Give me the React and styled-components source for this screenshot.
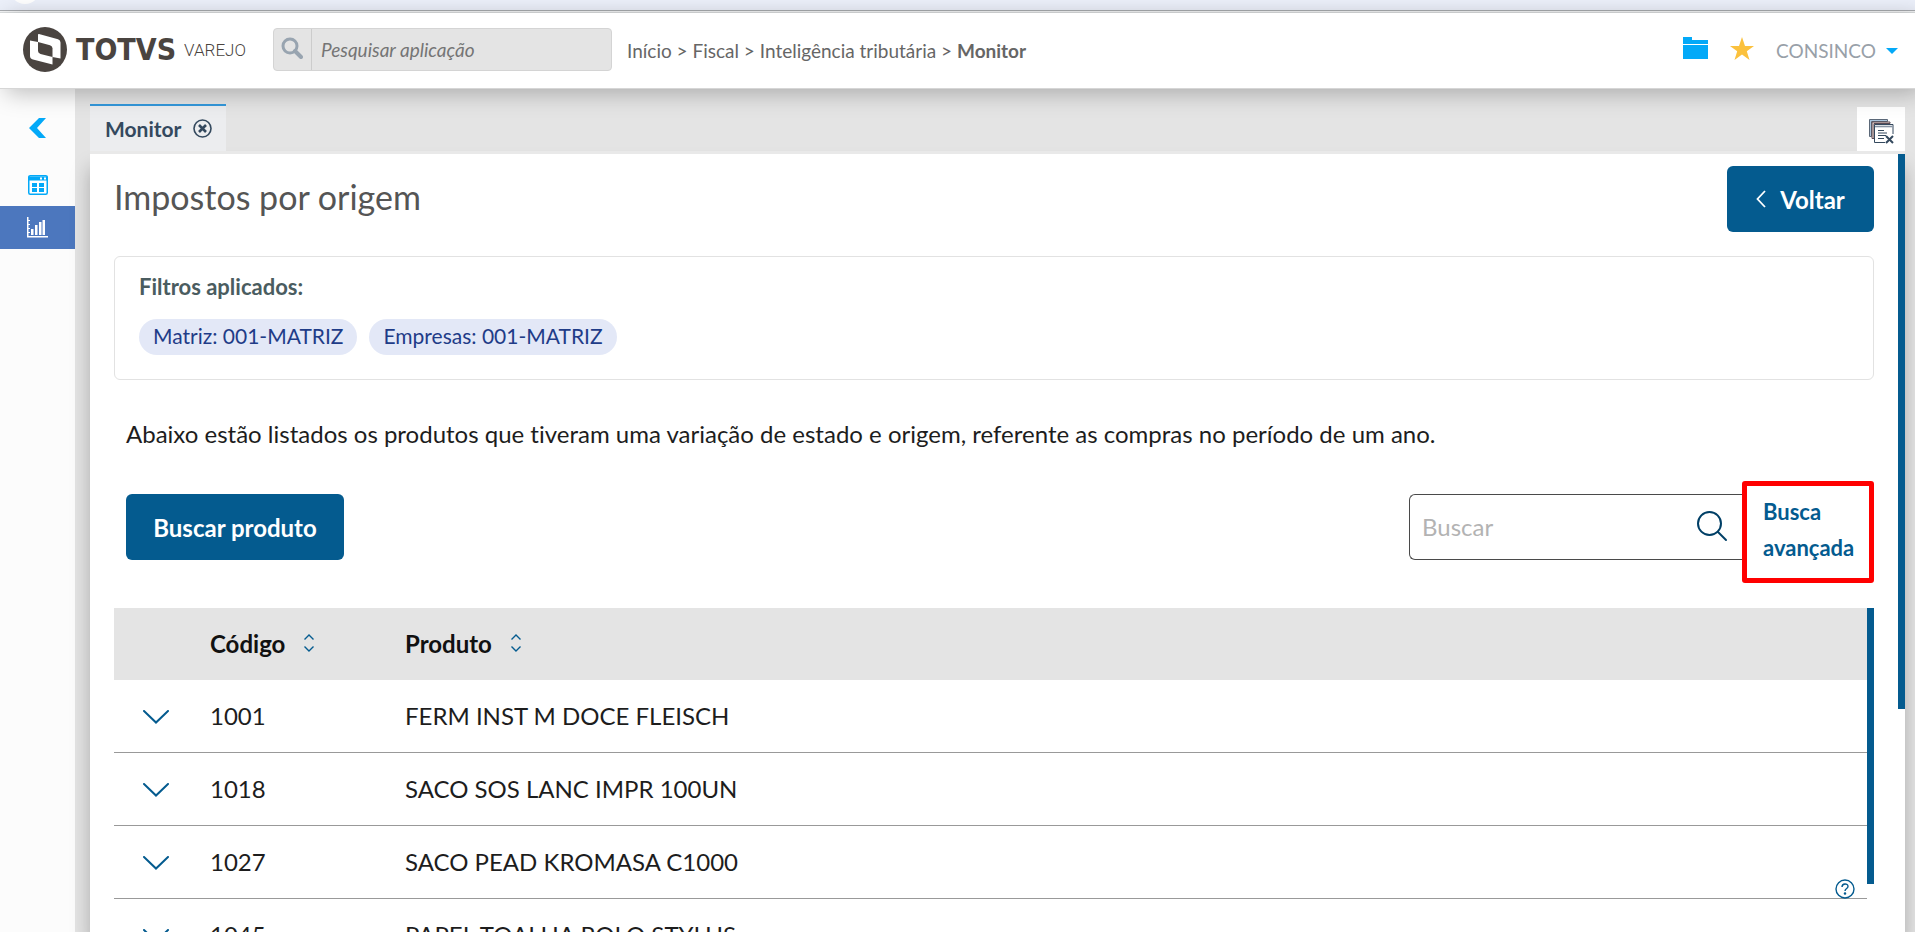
import React from "react";
import styled, { createGlobalStyle, css } from "styled-components";

const GlobalStyle = createGlobalStyle`
  *, *::before, *::after { box-sizing: border-box; }
  body { margin: 0; background: #e4e4e4; font-family: Lato, "Open Sans", sans-serif; font-variant-ligatures: none; color: #1d1d1d; }
  button, input { font-family: inherit; }
  h1, p { margin: 0; }
`;

const Shell = styled.div`
  height: 100vh;
  display: flex;
  flex-direction: column;
  overflow: hidden;
`;

const BrowserEdge = styled.div`
  position: relative;
  flex: none;
  height: 13px;
  background: #ecf0fa;
  border-bottom: 1px solid #dcdfe0;
  box-shadow: inset 0 -1px #f4f5f6, inset 0 -2px #a9acb0;
  overflow: hidden;
  &::before {
    content: "";
    position: absolute;
    left: 10px;
    top: -26px;
    width: 30px;
    height: 30px;
    border-radius: 50%;
    background: #fff;
  }
`;

const Header = styled.header`
  position: relative;
  z-index: 2;
  flex: none;
  height: 76px;
  display: flex;
  align-items: center;
  padding: 0 17px 2px 23px;
  background: #fff;
  border-bottom: 1px solid #d6d6d6;
  box-shadow: 6px 4px 22px rgba(0, 0, 0, 0.26);
`;

const Brand = styled.a`
  display: flex;
  align-items: center;
  width: 250px;
  flex: none;
  color: #4a4440;
  text-decoration: none;
`;

const BrandName = styled.span`
  margin-left: 9px;
  font: 700 30px/44px "DejaVu Sans Condensed", "DejaVu Sans", sans-serif;
`;

const BrandUnit = styled.span`
  margin-left: 8px;
  font: 300 17px/44px Roboto, sans-serif;
`;

const AppSearch = styled.label`
  display: flex;
  flex: none;
  width: 339px;
  height: 43px;
  background: #e4e4e4;
  border: 1px solid #d4d4d4;
  border-radius: 4px;
  overflow: hidden;
`;

const AppSearchIcon = styled.span`
  width: 38px;
  display: flex;
  align-items: center;
  justify-content: center;
  padding: 0 2px 4px 0;
  border-right: 1px solid #ccc;
`;

const AppSearchInput = styled.input`
  flex: 1;
  min-width: 0;
  padding: 0 9px;
  border: 0;
  outline: 0;
  background: transparent;
  font-size: 19px;
  font-style: italic;
  &::placeholder { color: #757575; opacity: 1; }
`;

const Breadcrumb = styled.nav`
  flex: 1;
  margin-left: 15px;
  padding-top: 2px;
  font-size: 19px;
  line-height: 24px;
  color: #666;
  a { color: inherit; text-decoration: none; }
`;

const IconButton = styled.button`
  display: flex;
  align-items: center;
  justify-content: center;
  padding: 0;
  border: 0;
  background: none;
  cursor: pointer;
`;

const HeaderActions = styled.div`
  display: flex;
  align-items: center;
  gap: 22px;
  svg { display: block; }
`;

const UserButton = styled.button`
  display: flex;
  align-items: center;
  gap: 10px;
  padding: 2px 0 0;
  border: 0;
  background: none;
  color: #98a0a8;
  font-size: 19px;
  line-height: 24px;
`;

const Body = styled.div`
  flex: 1;
  min-height: 0;
  display: flex;
`;

const Sidebar = styled.nav`
  flex: none;
  width: 75px;
  padding-top: 18px;
  background: #fcfcfc;
`;

const SideButton = styled.button`
  display: flex;
  align-items: center;
  justify-content: center;
  width: 100%;
  height: ${(p) => (p.$tall ? "56px" : "43px")};
  padding: 0;
  border: 0;
  background: ${(p) => (p.$active ? "#4c77be" : "transparent")};
  ${(p) => p.$tall && css`padding-bottom: 14px;`}
`;

const Workspace = styled.div`
  flex: 1;
  min-width: 0;
  display: flex;
  flex-direction: column;
  padding: 15px 10px 0 15px;
`;

const TabBar = styled.div`
  position: relative;
  z-index: 1;
  flex: none;
  display: flex;
  justify-content: space-between;
  align-items: flex-end;
  height: 50px;
  border-bottom: 3px solid #e9e9e9;
`;

const Tab = styled.div`
  display: flex;
  align-items: center;
  gap: 12px;
  height: 47px;
  padding: 0 14px 0 15px;
  border-top: 2px solid #3498db;
  background: #ecedef;
  color: #34495e;
  font-size: 21px;
  font-weight: 700;
`;

const CloseAll = styled(IconButton)`
  width: 48px;
  height: 44px;
  padding-top: 4px;
  background: #fff;
`;

const Panel = styled.main`
  flex: 1;
  min-height: 0;
  display: flex;
  background: #fff;
  box-shadow: 0 14px 18px rgba(0, 0, 0, 0.25);
`;

const Page = styled.div`
  flex: 1;
  min-width: 0;
  padding: 12px 24px 0;
  overflow: hidden;
`;

const ScrollThumb = styled.div`
  flex: none;
  width: 7px;
  height: ${(p) => p.$size};
  background: #045b8f;
`;

const PageHeader = styled.div`
  display: flex;
  justify-content: space-between;
  align-items: center;
  height: 66px;
`;

const Title = styled.h1`
  padding-bottom: 4px;
  font-size: 34px;
  line-height: 44px;
  font-weight: 400;
  color: #555;
`;

const PrimaryButton = styled.button`
  display: flex;
  align-items: center;
  justify-content: center;
  gap: 14px;
  min-width: ${(p) => p.$width};
  height: 66px;
  border: 0;
  border-radius: 6px;
  background: #045b8f;
  color: #fff;
  font-size: 24px;
  font-weight: 700;
`;

const FilterCard = styled.section`
  height: 124px;
  margin-top: 24px;
  padding: 18px 24px;
  border: 1px solid #e2e2e2;
  border-radius: 6px;
`;

const FilterLabel = styled.p`
  font-size: 22px;
  line-height: 24px;
  font-weight: 700;
  color: #4a5c60;
`;

const Chips = styled.div`
  display: flex;
  gap: 12px;
  margin-top: 20px;
`;

const Chip = styled.span`
  height: 36px;
  padding: 0 14px;
  border-radius: 18px;
  background: #e3e8f7;
  color: #1f3c88;
  font-size: 21px;
  line-height: 34px;
`;

const Intro = styled.p`
  margin-top: 36px;
  padding-left: 12px;
  font-size: 24px;
  line-height: 36px;
`;

const Toolbar = styled.div`
  display: flex;
  justify-content: space-between;
  align-items: center;
  height: 66px;
  margin-top: 42px;
  padding-left: 12px;
`;

const SearchGroup = styled.div`
  display: flex;
  align-items: center;
  height: 66px;
`;

const SearchBox = styled.label`
  display: flex;
  align-items: center;
  width: 333px;
  height: 66px;
  padding: 0 14px 2px 12px;
  border: 1px solid #4a4a4a;
  border-right: 0;
  border-radius: 6px 0 0 6px;
`;

const SearchInput = styled.input`
  flex: 1;
  min-width: 0;
  padding: 0;
  border: 0;
  outline: 0;
  font-size: 24px;
  &::placeholder { color: #b3b3b3; opacity: 1; }
`;

const AdvancedSearch = styled.a`
  align-self: flex-start;
  width: 132px;
  height: 102px;
  margin-top: -13px;
  padding: 8px 10px 0 16px;
  border: 5px solid #f00;
  border-radius: 3px;
  color: #045b8f;
  font-size: 22px;
  line-height: 36px;
  font-weight: 700;
  text-decoration: none;
`;

const TableArea = styled.div`
  display: flex;
  margin-top: 48px;
`;

const Table = styled.table`
  flex: 1;
  border-collapse: separate;
  border-spacing: 0;
  table-layout: fixed;
  font-size: 24px;
  th, td { padding: 0 0 2px; text-align: left; }
  th { height: 72px; background: #e4e4e4; color: #111; }
  td { height: 73px; border-bottom: 1px solid #999; }
  td:first-child { padding: 0; }
`;

const SortButton = styled.button`
  display: inline-flex;
  align-items: center;
  gap: 18px;
  padding: 0;
  border: 0;
  background: none;
  color: inherit;
  font-size: 24px;
  font-weight: 700;
`;

const RowToggle = styled(IconButton)`
  width: 84px;
  height: 72px;
  padding-top: 2px;
`;

const HelpButton = styled(IconButton)`
  position: fixed;
  right: 60px;
  bottom: 33px;
`;

const SortIcon = () => (
  <svg width="12" height="18" viewBox="0 0 12 18" fill="none" stroke="#045b8f" strokeWidth="1.4">
    <path d="M1.5 5.5 6 1l4.500 4.500M1.500 12.500 6 17l4.500-4.500" />
  </svg>
);

const rows = [
  ["1001", "FERM INST M DOCE FLEISCH"],
  ["1018", "SACO SOS LANC IMPR 100UN"],
  ["1027", "SACO PEAD KROMASA C1000"],
  ["1045", "PAPEL TOALHA ROLO STYLUS"],
];

export default function App() {
  return (
    <Shell>
      <GlobalStyle />
      <BrowserEdge />
      <Header>
        <Brand href="#">
          <svg width="44" height="45" viewBox="0 0 44 45" aria-hidden="true">
            <ellipse cx="22" cy="22.500" rx="22" ry="22.500" fill="#4a4440" />
            <path d="M16 7 35 12.200Q37.500 13 37.500 15.500V31.500L29.500 30V37.500L10 32.500Q7 31.600 7 29V13.500L15 15V8Q15 6.700 16 7Z" fill="#fff" />
            <path d="M15 15 27 18.200Q29.500 19 29.500 21.500V30L17.500 27Q15 26.200 15 24Z" fill="#4a4440" />
          </svg>
          <BrandName>TOTVS</BrandName>
          <BrandUnit>VAREJO</BrandUnit>
        </Brand>
        <AppSearch>
          <AppSearchIcon>
            <svg width="22" height="22" viewBox="0 0 22 22" fill="none" stroke="#98a4b0">
              <circle cx="9" cy="9" r="7" strokeWidth="3" />
              <path d="m14 14 6 6" strokeWidth="4" strokeLinecap="round" />
            </svg>
          </AppSearchIcon>
          <AppSearchInput aria-label="Pesquisar aplicação" placeholder="Pesquisar aplicação" />
        </AppSearch>
        <Breadcrumb>
          <a href="#">Início</a> &gt; <a href="#">Fiscal</a> &gt; <a href="#">Inteligência tributária</a> &gt; <b>Monitor</b>
        </Breadcrumb>
        <HeaderActions>
          <IconButton aria-label="Pastas">
            <svg width="25" height="26" viewBox="0 0 25 26" fill="#03a9f8">
              <path d="M0 0h9v3h16v4H0zM0 8h25v14H0z" />
            </svg>
          </IconButton>
          <IconButton aria-label="Favoritos">
            <svg width="24" height="26" viewBox="0 0 24 26" fill="#fbc13d">
              <path d="m12 0 3 9h9l-7.200 5.300L19.500 23 12 17.600 4.500 23l2.700-8.700L0 9h9z" />
            </svg>
          </IconButton>
          <UserButton>
            CONSINCO
            <svg width="12" height="6" viewBox="0 0 12 6" fill="#03a9f8"><path d="M0 0h12L6 6z" /></svg>
          </UserButton>
        </HeaderActions>
      </Header>
      <Body>
        <Sidebar>
          <SideButton $tall aria-label="Recolher menu">
            <svg width="18" height="20" viewBox="0 0 18 20" fill="#03a9f8"><path d="M10 0h7L8 10l9 10h-7L0 10z" /></svg>
          </SideButton>
          <SideButton aria-label="Aplicações">
            <svg width="20" height="20" viewBox="0 0 20 20">
              <rect x="0.750" y="0.750" width="18.500" height="18.500" rx="1.500" fill="#fff" stroke="#03a9f8" strokeWidth="1.500" />
              <path d="M0 1.500h20V5.500H0zM4 8h5v4H4zM11 8h5v4h-5zM4 13h5v4H4zM11 13h5v4h-5z" fill="#03a9f8" />
              <path d="M12 2.500h2v2h-2zM16 2.500h2v2h-2z" fill="#fff" />
            </svg>
          </SideButton>
          <SideButton $active aria-label="Monitor">
            <svg width="21" height="21" viewBox="0 0 21 21" fill="#fff">
              <path d="M0 0h1.500v19H21v1.500H0zM4 12h2.500v6H4zM8 8h2.500v10H8zM12 5h2.500v13H12zM15.500 3H18v15h-2.500zM1 3h2v1H1zM1 7h2v1H1zM1 11h2v1H1zM1 15h2v1H1z" />
            </svg>
          </SideButton>
        </Sidebar>
        <Workspace>
          <TabBar>
            <Tab>
              Monitor
              <IconButton aria-label="Fechar Monitor">
                <svg width="19" height="19" viewBox="0 0 19 19" fill="none" stroke="#34495e">
                  <circle cx="9.500" cy="9.500" r="8.500" strokeWidth="1.600" />
                  <path d="m6 6 7 7m0-7-7 7" strokeWidth="2.600" />
                </svg>
              </IconButton>
            </Tab>
            <CloseAll aria-label="Fechar todas as abas">
              <svg width="25" height="25" viewBox="0 0 25 25" fill="none" stroke="#34495e" strokeWidth="1">
                <path d="M.5 17.500V.5h18v2H2.500v15z" fill="#a9c4dc" stroke="#5b6878" />
                <path d="M3 19.500V3h18v1.500H5v15z" fill="#f3ded6" stroke="#5a4a55" />
                <path d="M16 23.500H5.500V5.500H24V15" fill="#fff" />
                <path d="M6 7.500h17.500" stroke="#8793a3" strokeWidth="1.600" />
                <path d="M9 11.500h6M9 14h9M9 16.500h8M9 19.500h6" />
                <path d="m17 17 7 7m0-7-7 7" strokeWidth="2" />
              </svg>
            </CloseAll>
          </TabBar>
          <Panel>
            <Page>
              <PageHeader>
                <Title>Impostos por origem</Title>
                <PrimaryButton $width="147px">
                  <svg width="10" height="18" viewBox="0 0 10 18" fill="none" stroke="#fff" strokeWidth="1.800"><path d="M9 1 1.500 9 9 17" /></svg>
                  Voltar
                </PrimaryButton>
              </PageHeader>
              <FilterCard>
                <FilterLabel>Filtros aplicados:</FilterLabel>
                <Chips>
                  <Chip>Matriz: 001-MATRIZ</Chip>
                  <Chip>Empresas: 001-MATRIZ</Chip>
                </Chips>
              </FilterCard>
              <Intro>
                Abaixo estão listados os produtos que tiveram uma variação de estado e origem, referente as compras no período de um ano.
              </Intro>
              <Toolbar>
                <PrimaryButton $width="218px">Buscar produto</PrimaryButton>
                <SearchGroup>
                  <SearchBox>
                    <SearchInput aria-label="Buscar" placeholder="Buscar" />
                    <svg width="32" height="32" viewBox="0 0 32 32" fill="none" stroke="#003f66" strokeWidth="2">
                      <circle cx="13.500" cy="13.500" r="11.500" />
                      <path d="m22 22 8 8" strokeLinecap="round" />
                    </svg>
                  </SearchBox>
                  <AdvancedSearch href="#">Busca avançada</AdvancedSearch>
                </SearchGroup>
              </Toolbar>
              <TableArea>
                <Table>
                  <colgroup>
                    <col style={{ width: 96 }} />
                    <col style={{ width: 195 }} />
                    <col />
                  </colgroup>
                  <thead>
                    <tr>
                      <th aria-label="Detalhes" />
                      <th><SortButton>Código <SortIcon /></SortButton></th>
                      <th><SortButton>Produto <SortIcon /></SortButton></th>
                    </tr>
                  </thead>
                  <tbody>
                    {rows.map(([code, name]) => (
                      <tr key={code}>
                        <td>
                          <RowToggle aria-label={`Expandir ${code}`}>
                            <svg width="26" height="14" viewBox="0 0 26 14" fill="none" stroke="#045b8f" strokeWidth="2" strokeLinecap="round"><path d="m1 1 12 11.500L25 1" /></svg>
                          </RowToggle>
                        </td>
                        <td>{code}</td>
                        <td>{name}</td>
                      </tr>
                    ))}
                  </tbody>
                </Table>
                <ScrollThumb $size="276px" />
              </TableArea>
            </Page>
            <ScrollThumb $size="71.4%" />
          </Panel>
        </Workspace>
      </Body>
      <HelpButton aria-label="Ajuda">
        <svg width="20" height="20" viewBox="0 0 20 20" fill="none" stroke="#045b8f" strokeWidth="1.400">
          <circle cx="10" cy="10" r="9" />
          <path d="M7 8c0-4 6-4 6-.5 0 2-3 2-3 4.500" />
          <circle cx="10" cy="14.500" r="0.600" fill="#045b8f" />
        </svg>
      </HelpButton>
    </Shell>
  );
}
